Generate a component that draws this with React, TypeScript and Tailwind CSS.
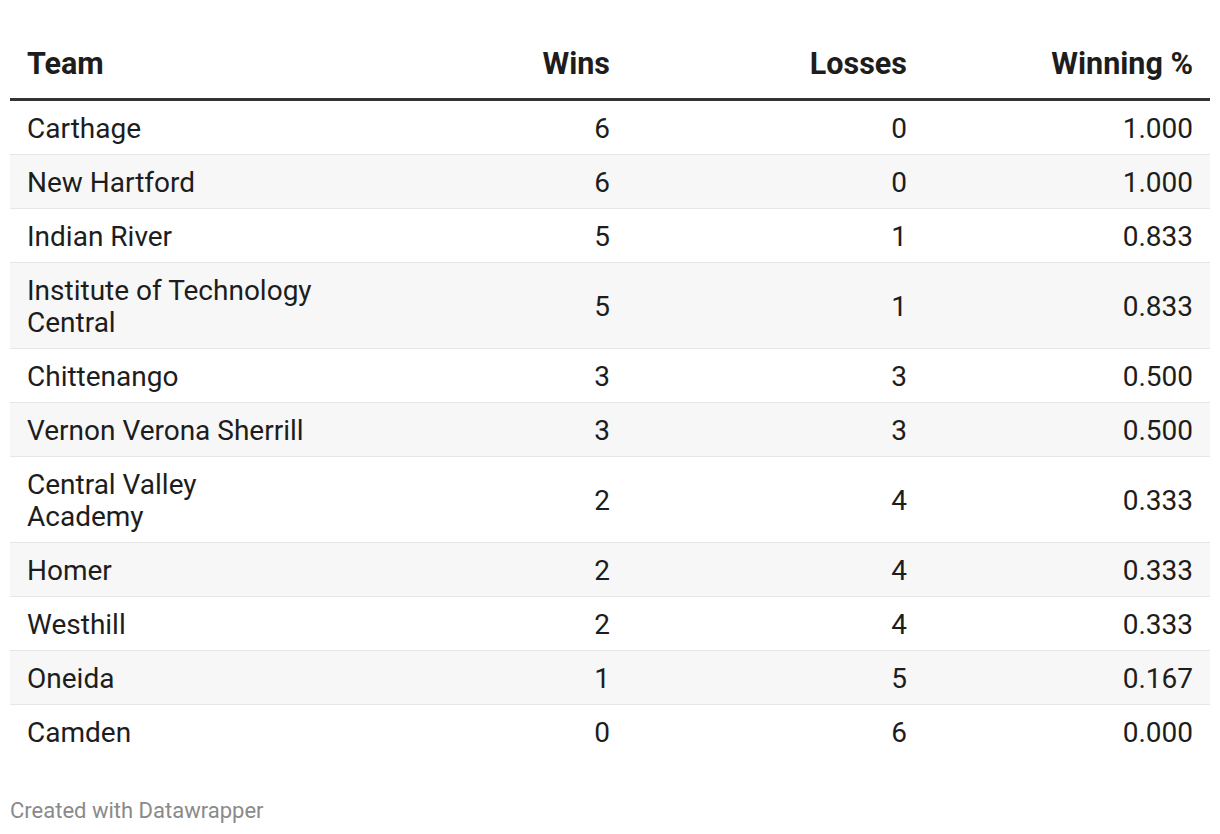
const rows: [string, number, number, string][] = [
  ["Carthage", 6, 0, "1.000"],
  ["New Hartford", 6, 0, "1.000"],
  ["Indian River", 5, 1, "0.833"],
  ["Institute of Technology Central", 5, 1, "0.833"],
  ["Chittenango", 3, 3, "0.500"],
  ["Vernon Verona Sherrill", 3, 3, "0.500"],
  ["Central Valley Academy", 2, 4, "0.333"],
  ["Homer", 2, 4, "0.333"],
  ["Westhill", 2, 4, "0.333"],
  ["Oneida", 1, 5, "0.167"],
  ["Camden", 0, 6, "0.000"],
];

export default function App() {
  return (
    <div className="min-h-screen bg-white px-[10px] pt-[35px] text-[#1d1d1d] [font-family:Roboto,'Liberation_Sans',sans-serif]">
      <table className="w-[1200px] table-fixed border-collapse">
        <thead>
          <tr className="border-b-[3px] border-[#333333]">
            <th className="w-[322px] pl-[17px] pr-[17px] pt-[11px] pb-[16px] text-left text-[30.5px] font-bold leading-[36px]">
              Team
            </th>
            <th className="w-[295px] pr-[17px] pt-[11px] pb-[16px] text-right text-[30.5px] font-bold leading-[36px]">
              Wins
            </th>
            <th className="w-[297px] pr-[17px] pt-[11px] pb-[16px] text-right text-[30.5px] font-bold leading-[36px]">
              Losses
            </th>
            <th className="w-[286px] pr-[17px] pt-[11px] pb-[16px] text-right text-[30.5px] font-bold leading-[36px]">
              Winning %
            </th>
          </tr>
        </thead>
        <tbody className="text-[28px] leading-[32px]">
          {rows.map(([team, w, l, pct], i) => (
            <tr
              key={team}
              className={`${i % 2 === 1 ? "bg-[#f7f7f7]" : "bg-white"} ${
                i < rows.length - 1 ? "border-b border-[#e6e6e6]" : ""
              }`}
            >
              <td className="pl-[17px] pr-[17px] pt-[12px] pb-[9px] align-middle">{team}</td>
              <td className="pr-[17px] pt-[12px] pb-[9px] text-right align-middle">{w}</td>
              <td className="pr-[17px] pt-[12px] pb-[9px] text-right align-middle">{l}</td>
              <td className="pr-[17px] pt-[12px] pb-[9px] text-right align-middle">{pct}</td>
            </tr>
          ))}
        </tbody>
      </table>
      <p className="mt-[40px] text-[22px] leading-[26px] text-[#8a8a8a]">Created with Datawrapper</p>
    </div>
  );
}
